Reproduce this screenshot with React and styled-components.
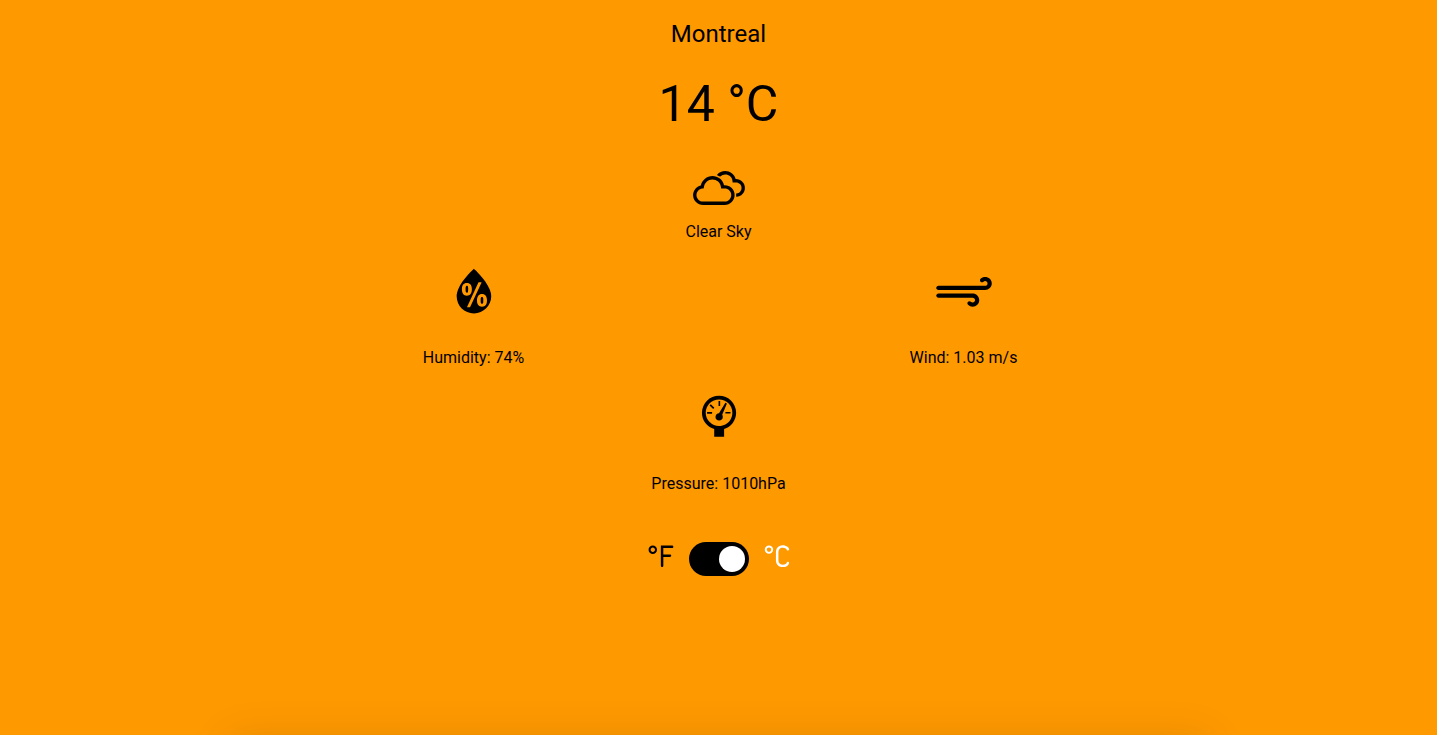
import React, { useState } from "react";
import styled, { createGlobalStyle } from "styled-components";
import {
  WiCloudy,
  WiHumidity,
  WiStrongWind,
  WiBarometer,
  WiFahrenheit,
  WiCelsius,
} from "react-icons/wi";

const GlobalStyle = createGlobalStyle`
  *, *::before, *::after { box-sizing: border-box; }
  html { overflow: hidden; }
  body {
    margin: 0;
    background: #ff9900;
    color: #000;
    font-family: Roboto, sans-serif;
    font-size: 16px;
    line-height: 16px;
  }
`;

const Page = styled.div`
  height: 100vh;
  overflow: hidden;
`;

const Weather = styled.main`
  display: flex;
  flex-direction: column;
  align-items: center;
  min-height: 100vh;
  max-width: 980px;
  margin: 0 auto;
  padding-top: 20px;
`;

const City = styled.h1`
  margin: 0;
  font-size: 24px;
  font-weight: 400;
  line-height: 28px;
`;

const Temperature = styled.p`
  margin: 26px 0 20px;
  font-size: 50px;
  line-height: 60px;
`;

const Condition = styled.section`
  display: flex;
  flex-direction: column;
  align-items: center;
  gap: ${({ $gap }) => $gap}px;
  svg { display: block; }
`;

const Label = styled.p`
  margin: 0;
`;

const Readings = styled.div`
  display: grid;
  grid-template-columns: 1fr 1fr;
  width: 100%;
  margin: 16px 0;
`;

const UnitSwitch = styled.div`
  display: flex;
  align-items: center;
  justify-content: center;
  margin-top: 32px;
`;

const Unit = styled.span`
  display: flex;
  margin: 0 -7px;
  color: ${({ $active }) => ($active ? "#fff" : "#000")};
`;

const Track = styled.label`
  display: flex;
  width: 60px;
  height: 34px;
  padding: 4px;
  border-radius: 17px;
  background: #000;
  cursor: pointer;
`;

const Toggle = styled.input`
  appearance: none;
  width: 26px;
  height: 26px;
  margin: 0 0 0 ${({ checked }) => (checked ? 26 : 0)}px;
  border-radius: 50%;
  background: #fff;
  cursor: pointer;
`;

const NextPanel = styled.section`
  max-width: 980px;
  height: 300px;
  margin: 0 auto;
  box-shadow: 0 4px 40px rgba(0, 0, 0, 0.12);
`;

function Reading({ icon: Icon, children, gap = 24 }) {
  return (
    <Condition $gap={gap}>
      <Icon size={70} aria-hidden="true" />
      <Label>{children}</Label>
    </Condition>
  );
}

export default function App() {
  const [celsius, setCelsius] = useState(true);
  return (
    <Page>
      <GlobalStyle />
      <Weather>
        <City>Montreal</City>
        <Temperature>{celsius ? "14 °C" : "57 °F"}</Temperature>
        <Reading icon={WiCloudy} gap={0}>Clear Sky</Reading>
        <Readings>
          <Reading icon={WiHumidity}>Humidity: 74%</Reading>
          <Reading icon={WiStrongWind}>Wind: 1.03 m/s</Reading>
        </Readings>
        <Reading icon={WiBarometer}>Pressure: 1010hPa</Reading>
        <UnitSwitch>
          <Unit $active={!celsius}><WiFahrenheit size={70} aria-hidden="true" /></Unit>
          <Track>
            <Toggle
              type="checkbox"
              aria-label="Use Celsius"
              checked={celsius}
              onChange={(event) => setCelsius(event.target.checked)}
            />
          </Track>
          <Unit $active={celsius}><WiCelsius size={70} aria-hidden="true" /></Unit>
        </UnitSwitch>
      </Weather>
      <NextPanel />
    </Page>
  );
}
